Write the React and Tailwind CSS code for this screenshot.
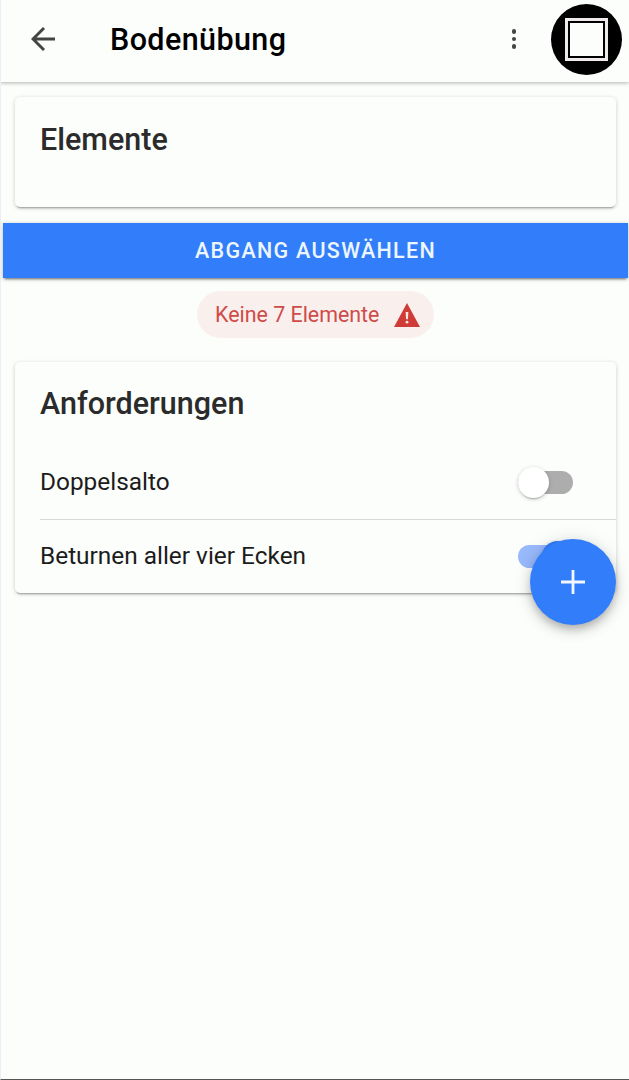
import React from 'react';

const cardClass =
  'ml-[15px] mr-[13px] rounded-[5px] bg-[#fcfefb] shadow-[0_3px_2px_-2px_rgba(0,0,0,0.3),0_1px_4px_rgba(0,0,0,0.2)]';

function Header() {
  return (
    <header className="flex h-[82px] shrink-0 items-center pb-1 pl-[29px] pr-[7px] shadow-[0_1px_4px_rgba(0,0,0,0.3)]">
      <button aria-label="Zurück" className="flex size-7 items-center justify-center">
        <svg viewBox="0 0 24 24" className="size-6" fill="none" stroke="#444" strokeWidth="2.9">
          <path d="M24 12H2M13 1L2 12l11 11" />
        </svg>
      </button>
      <h1 className="ml-[53px] pt-px text-[30.5px] font-medium leading-9 tracking-[0.4px] text-black">Bodenübung</h1>
      <button aria-label="Mehr" className="ml-auto mr-[33px] flex w-[8px] flex-col items-center gap-[3px]">
        <span className="size-[4.4px] rounded-full bg-[#444]" />
        <span className="size-[4.4px] rounded-full bg-[#444]" />
        <span className="size-[4.4px] rounded-full bg-[#444]" />
      </button>
      <div className="flex size-[71px] items-center justify-center rounded-full bg-black">
        <div className="size-[43px] border-[3px] border-[#eeeaec] bg-black p-[2px]">
          <div className="size-full bg-[#fcfefb]" />
        </div>
      </div>
    </header>
  );
}

function WarningIcon() {
  return (
    <svg viewBox="0 0 26 24" className="h-6 w-[26px]">
      <path d="M13 0L26 24H0Z" fill="#cf3c38" />
      <path d="M11.6 9h2.8l-.5 7.2h-1.8z" fill="#f6e4e1" />
      <circle cx="13" cy="19.2" r="1.4" fill="#f6e4e1" />
    </svg>
  );
}

function Toggle({ on }) {
  return (
    <div className={`flex h-[23px] w-[55px] items-center rounded-full ${on ? 'justify-end bg-[#98b9fb]' : 'bg-[#adadad]'}`}>
      <span
        className={`size-[31px] shrink-0 rounded-full shadow-[0_3px_2px_-2px_rgba(0,0,0,0.25),0_1px_4px_rgba(0,0,0,0.2)] ${on ? 'bg-[#327dfa]' : 'bg-white'}`}
      />
    </div>
  );
}

export default function App() {
  return (
    <div className="relative flex h-[1080px] w-[629px] flex-col overflow-hidden border-b border-l border-b-[#555] border-l-[#eeeefb] bg-[#fcfefb] font-['Roboto',sans-serif]">
      <div className="-ml-px flex flex-col">
        <Header />
        <main className="flex flex-col">
          <section className={`${cardClass} mt-[15px] h-[110px] px-[25px] pt-[25px]`}>
            <h2 className="text-[30.5px] font-medium leading-9 text-[#2b2b2b]">Elemente</h2>
          </section>
          <button className="ml-[3px] mr-px mt-[16px] h-[55px] bg-[#327dfa] pt-px text-[21.5px] font-medium tracking-[1.3px] text-[#ecf6ff] shadow-[0_3px_2px_-2px_rgba(0,0,0,0.4),0_1px_4px_rgba(0,0,0,0.3)]">
            ABGANG AUSWÄHLEN
          </button>
          <div className="ml-[197px] mt-[13px] flex h-[47px] w-[237px] items-center justify-between rounded-full bg-[#f9f0ed] pl-[18px] pr-[14px]">
            <span className="pt-px text-[21.4px] text-[#cf4b49]">Keine 7 Elemente</span>
            <WarningIcon />
          </div>
          <section className={`${cardClass} mt-[24px] flex h-[231px] flex-col pl-[25px]`}>
            <h2 className="mt-[24px] text-[30.5px] font-medium leading-9 text-[#2b2b2b]">Anforderungen</h2>
            <div className="mt-[24px] flex h-[74px] items-center justify-between border-b border-[#d8d9d7] pr-[43px] text-[24.4px] text-[#1c1c1c]">
              <span>Doppelsalto</span>
              <Toggle />
            </div>
            <div className="flex h-[72px] items-center justify-between pr-[43px] text-[24.4px] text-[#1c1c1c]">
              <span>Beturnen aller vier Ecken</span>
              <Toggle on />
            </div>
          </section>
        </main>
      </div>
      <button
        aria-label="Hinzufügen"
        className="absolute left-[528.5px] top-[538.5px] flex size-[86px] items-center justify-center rounded-full bg-[#327dfa] shadow-[0_5px_8px_-2px_rgba(0,0,0,0.2),0_6px_14px_rgba(0,0,0,0.12),0_1px_20px_rgba(0,0,0,0.1)]"
      >
        <svg viewBox="0 0 24 24" className="size-6" stroke="#f2f8ff" strokeWidth="2.8">
          <path d="M12 0v24M0 12h24" />
        </svg>
      </button>
    </div>
  );
}
